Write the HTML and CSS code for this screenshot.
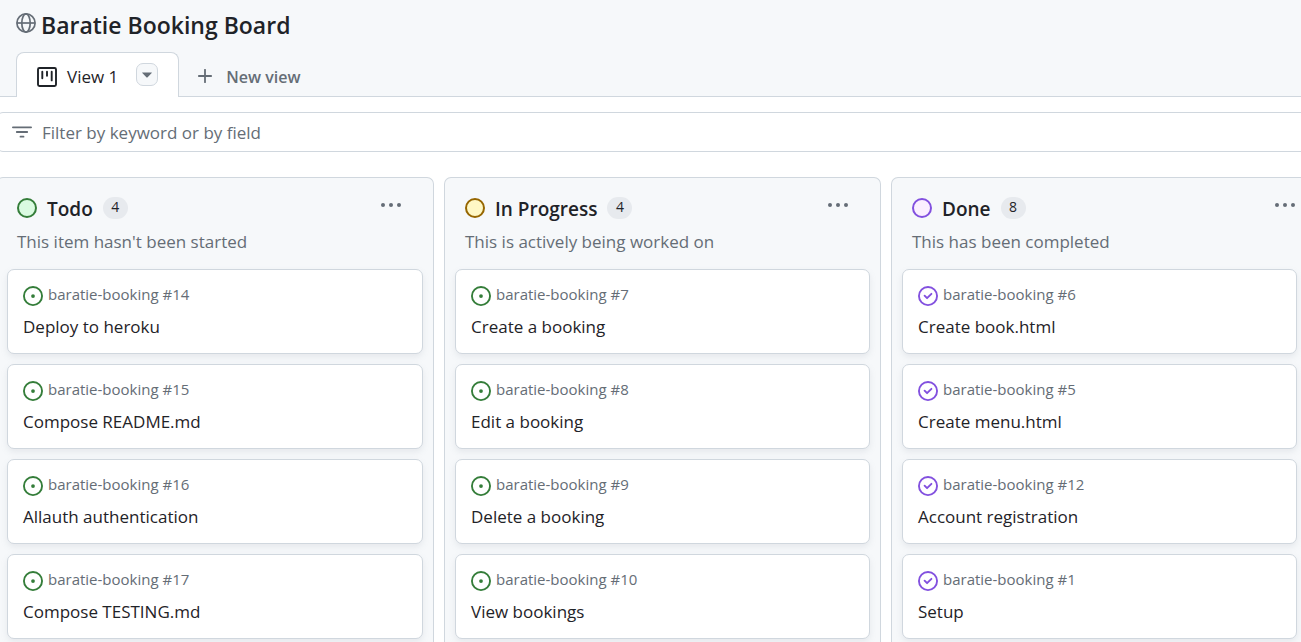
FILE: index.html
```html
<!DOCTYPE html>
<html lang="en">
<head>
<meta charset="utf-8">
<title>Baratie Booking Board</title>
<link rel="stylesheet" href="styles.css">
</head>
<body>
<svg class="sprite" aria-hidden="true">
  <symbol id="open" viewBox="0 0 16 16"><path d="M8 9.5a1.5 1.5 0 1 0 0-3 1.5 1.5 0 0 0 0 3Z"/><path d="M8 0a8 8 0 1 1 0 16A8 8 0 0 1 8 0ZM1.5 8a6.5 6.5 0 1 0 13 0 6.5 6.5 0 0 0-13 0Z"/></symbol>
  <symbol id="closed" viewBox="0 0 16 16"><path d="M11.28 6.78a.75.75 0 0 0-1.06-1.06L7.25 8.69 5.78 7.22a.75.75 0 0 0-1.06 1.06l2 2a.75.75 0 0 0 1.06 0l3.5-3.5Z"/><path d="M16 8A8 8 0 1 1 0 8a8 8 0 0 1 16 0Zm-1.5 0a6.5 6.5 0 1 0-13 0 6.5 6.5 0 0 0 13 0Z"/></symbol>
  <symbol id="dots" viewBox="0 0 22 6"><circle cx="3" cy="3" r="2"/><circle cx="11" cy="3" r="2"/><circle cx="19" cy="3" r="2"/></symbol>
</svg>
<header class="header">
  <div class="heading">
    <svg class="icon globe" viewBox="0 0 20 20" aria-hidden="true"><circle cx="10" cy="10" r="9.1"/><ellipse cx="10" cy="10" rx="4.2" ry="9.1"/><path d="M1 10h18"/></svg>
    <h1 class="title">Baratie Booking Board</h1>
  </div>
  <nav class="tabs">
    <div class="tab">
      <a class="tab-link" href="#view-1">
        <svg class="icon board-icon" viewBox="0 0 20 20" aria-hidden="true"><rect x="1" y="1" width="18" height="18" rx="1.4"/><path d="M5.3 4.8v6.4M10 4.8v4M14.7 4.8v8.6"/></svg>
        View 1
      </a>
      <button class="caret" type="button" aria-label="View options"><svg viewBox="0 0 10 6" width="10" height="6" aria-hidden="true"><path d="M.6.4h8.8c.4 0 .6.4.3.7L5.4 5.4a.6.6 0 0 1-.8 0L.3 1.1C0 .8.2.4.6.4Z"/></svg></button>
    </div>
    <button class="new-view" type="button"><svg class="plus" viewBox="0 0 14 14" aria-hidden="true"><path d="M7 .8v12.4M.8 7h12.4"/></svg><span class="new-view-text">New view</span></button>
  </nav>
</header>
<main class="main" id="view-1">
  <label class="filter">
    <svg class="icon filter-icon" viewBox="0 0 20 20" aria-hidden="true"><path d="M.9 5.3h18.2M4.8 10h10.4M8.5 14.7h3"/></svg>
    <input class="filter-input" type="text" placeholder="Filter by keyword or by field" aria-label="Filter by keyword or by field">
  </label>
  <div class="board">
    <section class="column">
      <header class="column-header">
        <span class="status status-todo"></span><h2 class="column-title">Todo</h2><span class="count">4</span>
        <button class="more" type="button" aria-label="Todo options"><svg class="more-icon"><use href="#dots"/></svg></button>
      </header>
      <p class="description">This item hasn't been started</p>
      <article class="card"><div class="meta"><svg class="icon open"><use href="#open"/></svg>baratie-booking #14</div><a class="card-title" href="#14">Deploy to heroku</a></article>
      <article class="card"><div class="meta"><svg class="icon open"><use href="#open"/></svg>baratie-booking #15</div><a class="card-title" href="#15">Compose README.md</a></article>
      <article class="card"><div class="meta"><svg class="icon open"><use href="#open"/></svg>baratie-booking #16</div><a class="card-title" href="#16">Allauth authentication</a></article>
      <article class="card"><div class="meta"><svg class="icon open"><use href="#open"/></svg>baratie-booking #17</div><a class="card-title" href="#17">Compose TESTING.md</a></article>
    </section>
    <section class="column">
      <header class="column-header">
        <span class="status status-progress"></span><h2 class="column-title">In Progress</h2><span class="count">4</span>
        <button class="more" type="button" aria-label="In Progress options"><svg class="more-icon"><use href="#dots"/></svg></button>
      </header>
      <p class="description">This is actively being worked on</p>
      <article class="card"><div class="meta"><svg class="icon open"><use href="#open"/></svg>baratie-booking #7</div><a class="card-title" href="#7">Create a booking</a></article>
      <article class="card"><div class="meta"><svg class="icon open"><use href="#open"/></svg>baratie-booking #8</div><a class="card-title" href="#8">Edit a booking</a></article>
      <article class="card"><div class="meta"><svg class="icon open"><use href="#open"/></svg>baratie-booking #9</div><a class="card-title" href="#9">Delete a booking</a></article>
      <article class="card"><div class="meta"><svg class="icon open"><use href="#open"/></svg>baratie-booking #10</div><a class="card-title" href="#10">View bookings</a></article>
    </section>
    <section class="column">
      <header class="column-header">
        <span class="status status-done"></span><h2 class="column-title">Done</h2><span class="count">8</span>
        <button class="more" type="button" aria-label="Done options"><svg class="more-icon"><use href="#dots"/></svg></button>
      </header>
      <p class="description">This has been completed</p>
      <article class="card"><div class="meta"><svg class="icon closed"><use href="#closed"/></svg>baratie-booking #6</div><a class="card-title" href="#6">Create book.html</a></article>
      <article class="card"><div class="meta"><svg class="icon closed"><use href="#closed"/></svg>baratie-booking #5</div><a class="card-title" href="#5">Create menu.html</a></article>
      <article class="card"><div class="meta"><svg class="icon closed"><use href="#closed"/></svg>baratie-booking #12</div><a class="card-title" href="#12">Account registration</a></article>
      <article class="card"><div class="meta"><svg class="icon closed"><use href="#closed"/></svg>baratie-booking #1</div><a class="card-title" href="#1">Setup</a></article>
    </section>
  </div>
</main>
</body>
</html>
```
FILE: styles.css
```css
* { box-sizing: border-box; }
body {
  margin: 0;
  height: 100vh;
  overflow: hidden;
  display: flex;
  flex-direction: column;
  background: #fff;
  color: #1f2328;
  font: 17px/24px "Segoe UI", "Open Sans", "Noto Sans", sans-serif;
}
button, input { font: inherit; }
button { padding: 0; border: 0; background: none; cursor: pointer; }
a { color: inherit; text-decoration: none; }
h1, h2, p { margin: 0; }
.sprite { position: absolute; width: 0; height: 0; }
.icon { width: 20px; height: 20px; flex: none; }

.header { background: #f6f8fa; border-bottom: 1px solid #d0d7de; padding: 8px 16px 0; }
.heading { display: flex; align-items: flex-start; gap: 5px; height: 44px; }
.globe { margin-top: 5px; fill: none; stroke: #656d76; stroke-width: 1.7; }
.title { font-size: 23px; line-height: 34px; font-weight: 600; }
.tabs { display: flex; align-items: flex-start; }
.tab {
  display: flex;
  align-items: flex-start;
  gap: 18px;
  height: 45px;
  margin-bottom: -1px;
  padding: 10px 20px 0;
  background: #fff;
  border: 1px solid #d0d7de;
  border-bottom: 0;
  border-radius: 8px 8px 0 0;
}
.tab-link { display: flex; align-items: center; gap: 10px; height: 28px; }
.board-icon { fill: none; stroke: #1f2328; stroke-width: 1.9; stroke-linecap: round; }
.caret {
  display: flex;
  align-items: center;
  justify-content: center;
  width: 22px;
  height: 23px;
  background: #f6f8fa;
  border: 1px solid #d0d7de;
  border-radius: 7px;
  fill: #656d76;
}
.new-view { display: flex; align-items: center; gap: 14px; height: 28px; margin: 10px 0 0 19px; color: #656d76; font-size: 16px; font-weight: 600; }
.new-view-text { padding-top: 2px; }
.plus { width: 14px; height: 14px; fill: none; stroke: #656d76; stroke-width: 1.8; stroke-linecap: round; }

.main { flex: 1; min-height: 0; display: flex; flex-direction: column; gap: 25px; padding-top: 15px; }
.filter {
  display: flex;
  align-items: center;
  gap: 10px;
  height: 40px;
  margin: 0 -8px 0 -3px;
  padding: 0 14px;
  border: 1px solid #d0d7de;
  border-radius: 6px;
}
.filter-icon { fill: none; stroke: #656d76; stroke-width: 1.8; stroke-linecap: round; }
.filter-input { flex: 1; padding: 2px 0 0; border: 0; outline: 0; background: none; color: #1f2328; }
.filter-input::placeholder { color: #656d76; opacity: 1; }

.board { flex: 1; min-height: 0; display: grid; grid-template-columns: 438fr 437fr 417fr; gap: 10px; margin: 0 -7px 0 -4px; }
.column {
  display: flex;
  flex-direction: column;
  gap: 10px;
  padding: 15px 10px 0;
  background: #f6f8fa;
  border: 1px solid #d0d7de;
  border-bottom: 0;
  border-radius: 7px 7px 0 0;
}
.column-header { display: flex; align-items: center; gap: 10px; height: 30px; margin-bottom: -10px; padding: 0 10px; }
.column:last-child .column-header { padding-right: 0; }
.column:last-child .more { padding-right: 1px; }
.status { width: 20px; height: 20px; border: 2px solid; border-radius: 50%; }
.status-todo { background: #dafbe1; border-color: #347d39; }
.status-progress { background: #fff8c5; border-color: #966600; }
.status-done { background: #fbefff; border-color: #8250df; }
.column-title { padding-top: 2px; font-size: 19px; line-height: 28px; font-weight: 600; }
.count { min-width: 25px; padding: 0 8px 2px; background: #e7eaee; border-radius: 11px; font-size: 14px; line-height: 20px; text-align: center; }
.more { display: flex; margin-left: auto; padding: 5px 11px 12px; }
.more-icon { width: 22px; height: 6px; fill: #656d76; }
.description { padding: 7px 10px 5px; color: #656d76; }
.card {
  flex: none;
  height: 85px;
  padding: 12px 15px 0;
  background: #fff;
  border: 1px solid #d0d7de;
  border-radius: 7px;
  box-shadow: 0 3px 6px rgba(140, 149, 159, 0.15);
}
.meta { display: flex; align-items: flex-end; gap: 5px; color: #656d76; font-size: 15px; line-height: 24px; }
.open { fill: #347d39; }
.closed { fill: #8250df; }
.card-title { display: block; margin-top: 9px; }
```
